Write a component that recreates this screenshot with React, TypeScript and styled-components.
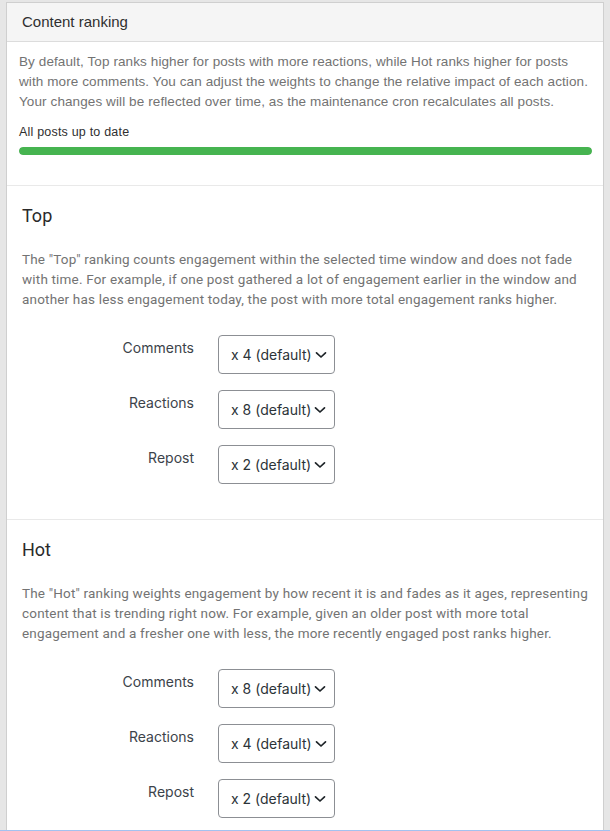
import React from "react";
import styled, { createGlobalStyle } from "styled-components";

const GlobalStyle = createGlobalStyle`
  html, body {
    margin: 0;
    padding: 0;
    background: #e6e6e6;
  }
  * { box-sizing: border-box; }
`;

const Viewport = styled.div`
  height: 831px;
  overflow: hidden;
  padding: 2px 6px 0 6px;
  border-bottom: 1px solid #a3c2f0;
  background: #e6e6e6;
`;

const Panel = styled.div`
  background: #fff;
  border: 1px solid #cfcfcf;
  min-height: 900px;
`;

const PanelHeader = styled.div`
  height: 39px;
  display: flex;
  align-items: center;
  padding: 0 15px 1px;
  background: #f5f5f5;
  border-bottom: 1px solid #dcdcdc;
  font-family: "Liberation Sans", Arial, sans-serif;
  font-size: 15px;
  color: #2f2f2f;
`;

const Intro = styled.div`
  padding: 10px 11px 30px 12px;
  font-family: "Liberation Sans", Arial, sans-serif;
`;

const IntroText = styled.p`
  margin: 0 -2px 0 0;
  font-size: 13.5px;
  letter-spacing: 0.1px;
  line-height: 20px;
  color: #737373;
`;

const Status = styled.div`
  margin-top: 12px;
  font-size: 12.5px;
  letter-spacing: 0.2px;
  line-height: 16px;
  color: #2f2f2f;
`;

const Progress = styled.div`
  margin-top: 7px;
  height: 8px;
  border-radius: 4px;
  background: #e5e5e5;
  overflow: hidden;
`;

const ProgressFill = styled.div`
  height: 100%;
  border-radius: 4px;
  background: #46b450;
`;

const Section = styled.section`
  border-top: 1px solid #e9e9e9;
  padding: 18px 15px 35px;
`;

const SectionTitle = styled.h2`
  margin: 0;
  font-family: Roboto, "Liberation Sans", sans-serif;
  font-weight: 400;
  font-size: 18px;
  line-height: 24px;
  color: #2a2a2a;
`;

const SectionText = styled.p`
  margin: 21px 0 0;
  font-family: Roboto, "Liberation Sans", sans-serif;
  font-size: 13.5px;
  letter-spacing: 0.18px;
  line-height: 20px;
  color: #737373;
`;

const Weights = styled.div`
  margin-top: 26px;
  display: flex;
  flex-direction: column;
  gap: 16px;
`;

const WeightRow = styled.div`
  display: grid;
  grid-template-columns: 172px 117px;
  column-gap: 24px;
  align-items: start;
`;

const WeightLabel = styled.label`
  margin-top: 3px;
  text-align: right;
  font-family: Inter, "Liberation Sans", sans-serif;
  font-size: 14px;
  line-height: 20px;
  color: #3c434a;
`;

const SelectBox = styled.button`
  height: 39px;
  width: 117px;
  display: flex;
  align-items: center;
  gap: 3px;
  padding: 0 0 0 12px;
  border: 1px solid #8c8f94;
  border-radius: 4px;
  background: #fff;
  font-family: Inter, "Liberation Sans", sans-serif;
  font-size: 14px;
  color: #2c3338;
  cursor: pointer;
`;

const Chevron = () => (
  <svg width="12" height="8" viewBox="0 0 12 8" aria-hidden="true">
    <path
      d="M1.5 1.8 L6 6 L10.5 1.8"
      fill="none"
      stroke="#1d2327"
      strokeWidth="1.7"
      strokeLinecap="round"
      strokeLinejoin="round"
    />
  </svg>
);

type Weight = { label: string; value: number };

const RankingSection = ({
  title,
  text,
  weights,
}: {
  title: string;
  text: string;
  weights: Weight[];
}) => (
  <Section>
    <SectionTitle>{title}</SectionTitle>
    <SectionText>{text}</SectionText>
    <Weights>
      {weights.map((w) => (
        <WeightRow key={w.label}>
          <WeightLabel>{w.label}</WeightLabel>
          <SelectBox type="button">
            <span>x {w.value} (default)</span>
            <Chevron />
          </SelectBox>
        </WeightRow>
      ))}
    </Weights>
  </Section>
);

export default function App() {
  return (
    <>
      <GlobalStyle />
      <Viewport>
        <Panel>
          <PanelHeader>Content ranking</PanelHeader>
          <Intro>
            <IntroText>
              By default, Top ranks higher for posts with more reactions, while Hot ranks higher for posts
              with more comments. You can adjust the weights to change the relative impact of each action.
              Your changes will be reflected over time, as the maintenance cron recalculates all posts.
            </IntroText>
            <Status>All posts up to date</Status>
            <Progress>
              <ProgressFill style={{ width: "100%" }} />
            </Progress>
          </Intro>
          <RankingSection
            title="Top"
            text={`The "Top" ranking counts engagement within the selected time window and does not fade with time. For example, if one post gathered a lot of engagement earlier in the window and another has less engagement today, the post with more total engagement ranks higher.`}
            weights={[
              { label: "Comments", value: 4 },
              { label: "Reactions", value: 8 },
              { label: "Repost", value: 2 },
            ]}
          />
          <RankingSection
            title="Hot"
            text={`The "Hot" ranking weights engagement by how recent it is and fades as it ages, representing content that is trending right now. For example, given an older post with more total engagement and a fresher one with less, the more recently engaged post ranks higher.`}
            weights={[
              { label: "Comments", value: 8 },
              { label: "Reactions", value: 4 },
              { label: "Repost", value: 2 },
            ]}
          />
        </Panel>
      </Viewport>
    </>
  );
}
